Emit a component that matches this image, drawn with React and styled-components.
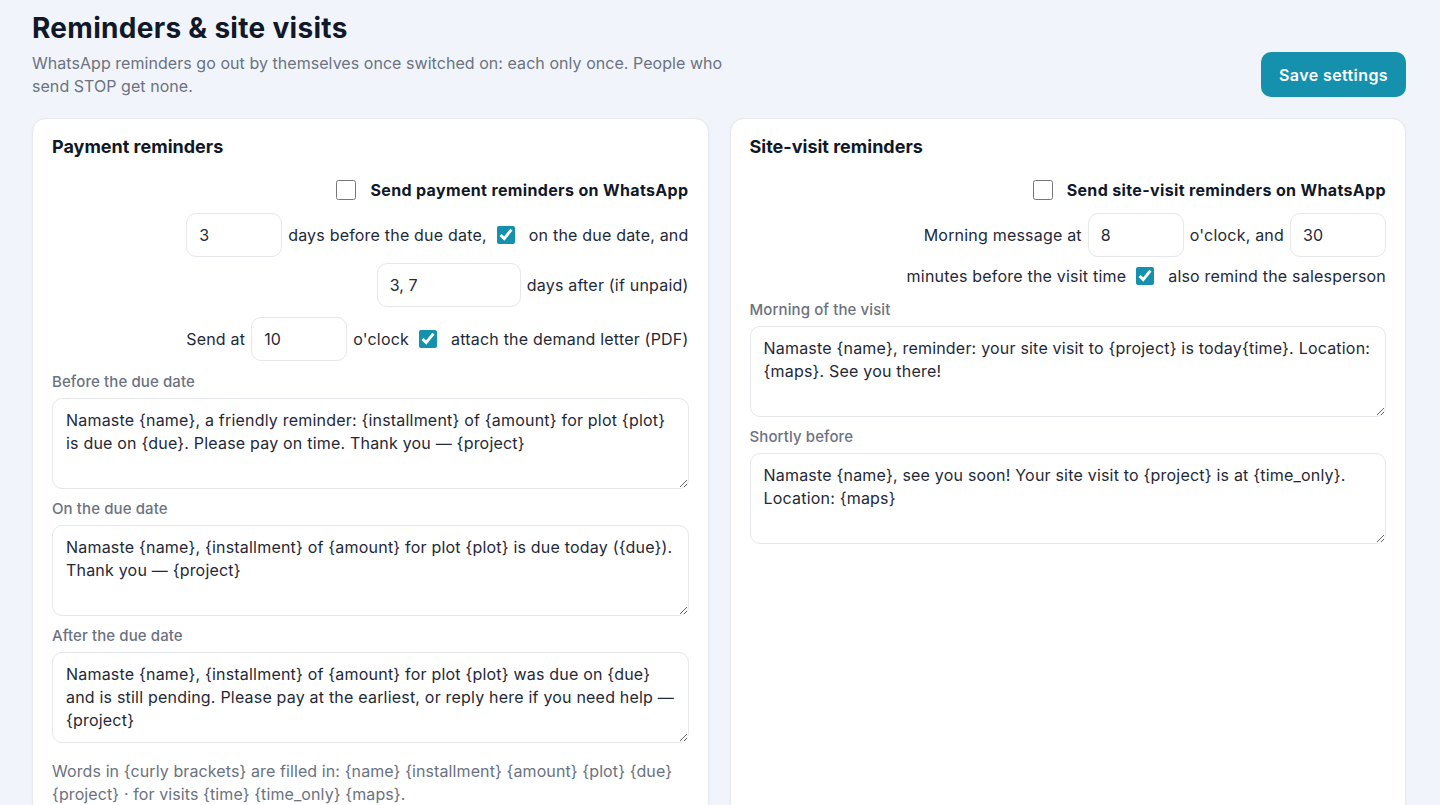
import React from 'react';
import styled, { createGlobalStyle } from 'styled-components';

const GlobalStyle = createGlobalStyle`
  * { box-sizing: border-box; }
  body {
    margin: 0;
    background: #f1f5fb;
    font-family: Inter, "Noto Sans", "Liberation Sans", sans-serif;
    color: #111827;
  }
`;

const Page = styled.div`
  padding: 10px 34px 0 32px;
`;

const Header = styled.header`
  display: flex;
  justify-content: space-between;
  align-items: flex-start;
  margin-bottom: 20px;
`;

const Title = styled.h1`
  margin: 0;
  font-size: 28px;
  font-weight: 700;
  line-height: 36px;
  letter-spacing: 0.3px;
  color: #111827;
`;

const Subtitle = styled.p`
  margin: 6px 0 0;
  max-width: 705px;
  font-size: 16px;
  line-height: 23px;
  color: #6b7280;
  letter-spacing: 0.05px;
`;

const SaveButton = styled.button`
  margin-top: 42px;
  height: 45px;
  padding: 0 18px;
  border: none;
  border-radius: 10px;
  background: #1591ae;
  color: #fff;
  font-family: inherit;
  font-size: 16px;
  font-weight: 600;
  letter-spacing: 0.4px;
  cursor: pointer;
`;

const Columns = styled.div`
  display: grid;
  grid-template-columns: 1fr 1fr;
  gap: 21px;
  align-items: stretch;
`;

const Card = styled.section`
  background: #fff;
  border: 1px solid #e6e9ef;
  border-radius: 14px;
  box-shadow: 0 1px 3px rgba(15, 23, 42, 0.05);
  padding: 18px 19px 24px;
  display: flex;
  flex-direction: column;
`;

const CardTitle = styled.h2`
  margin: 0 0 20px;
  font-size: 18px;
  font-weight: 700;
  line-height: 20px;
  letter-spacing: 0;
`;

const Options = styled.div`
  display: flex;
  flex-direction: column;
  align-items: flex-end;
  gap: ${p => p.$gap || 6}px;
  margin-bottom: ${p => p.$mb || 12}px;
`;

const Row = styled.div`
  display: flex;
  align-items: center;
  justify-content: flex-end;
  gap: 6px;
  min-height: ${p => p.$h || 0}px;
  margin-top: ${p => p.$mt || 0}px;
  font-size: 16px;
  color: #1f2937;
  letter-spacing: 0.2px;
  white-space: nowrap;
`;

const Check = styled.input.attrs({ type: 'checkbox' })`
  width: ${p => (p.$big ? 20 : 18)}px;
  height: ${p => (p.$big ? 20 : 18)}px;
  margin: 0 8px 0 ${p => p.$ml || 4}px;
  accent-color: #1591ae;
`;

const BoldLabel = styled.span`
  font-weight: 700;
  color: #111827;
  letter-spacing: 0.35px;
`;

const NumInput = styled.input`
  width: ${p => p.$w || 96}px;
  height: 44px;
  padding: 0 12px;
  border: 1px solid #e5e7eb;
  border-radius: 10px;
  font-family: inherit;
  font-size: 16px;
  color: #1f2937;
  background: #fff;
  outline: none;
`;

const FieldLabel = styled.label`
  display: block;
  font-size: 15px;
  font-weight: 500;
  line-height: 18px;
  color: #6b7280;
  margin-bottom: 7px;
  letter-spacing: 0.1px;
`;

const Message = styled.textarea`
  display: block;
  width: 100%;
  height: 91px;
  padding: 10px 13px;
  margin-bottom: 11px;
  border: 1px solid #e5e7eb;
  border-radius: 10px;
  font-family: inherit;
  font-size: 16px;
  line-height: 23px;
  letter-spacing: 0.2px;
  color: #1f2937;
  resize: vertical;
  outline: none;
`;

const Hint = styled.p`
  margin: 6px 0 0;
  font-size: 16px;
  line-height: 23px;
  color: #6b7280;
  letter-spacing: 0.1px;
`;

const payment = [
  {
    label: 'Before the due date',
    text: 'Namaste {name}, a friendly reminder: {installment} of {amount} for plot {plot} is due on {due}. Please pay on time. Thank you — {project}',
  },
  {
    label: 'On the due date',
    text: 'Namaste {name}, {installment} of {amount} for plot {plot} is due today ({due}). Thank you — {project}',
  },
  {
    label: 'After the due date',
    text: 'Namaste {name}, {installment} of {amount} for plot {plot} was due on {due} and is still pending. Please pay at the earliest, or reply here if you need help — {project}',
  },
];

const visits = [
  {
    label: 'Morning of the visit',
    text: 'Namaste {name}, reminder: your site visit to {project} is today{time}. Location: {maps}. See you there!',
  },
  {
    label: 'Shortly before',
    text: 'Namaste {name}, see you soon! Your site visit to {project} is at {time_only}. Location: {maps}',
  },
];

function MessageField({ label, text }) {
  return (
    <div>
      <FieldLabel>{label}</FieldLabel>
      <Message defaultValue={text} />
    </div>
  );
}

export default function App() {
  return (
    <>
      <GlobalStyle />
      <Page>
        <Header>
          <div>
            <Title>Reminders &amp; site visits</Title>
            <Subtitle>
              WhatsApp reminders go out by themselves once switched on: each only once. People who send STOP get none.
            </Subtitle>
          </div>
          <SaveButton>Save settings</SaveButton>
        </Header>

        <Columns>
          <Card>
            <CardTitle>Payment reminders</CardTitle>
            <Options>
              <Row $h={26}>
                <Check $big $ml={0} />
                <BoldLabel>Send payment reminders on WhatsApp</BoldLabel>
              </Row>
              <Row $mt={4}>
                <NumInput defaultValue="3" />
                <span>days before the due date,</span>
                <Check defaultChecked />
                <span>on the due date,&nbsp;and</span>
              </Row>
              <Row>
                <NumInput $w={144} defaultValue="3, 7" />
                <span>days after (if unpaid)</span>
              </Row>
              <Row $mt={4}>
                <span>Send at</span>
                <NumInput defaultValue="10" />
                <span>o'clock</span>
                <Check defaultChecked />
                <span>attach the demand letter (PDF)</span>
              </Row>
            </Options>
            {payment.map(m => (
              <MessageField key={m.label} {...m} />
            ))}
            <Hint>
              Words in {'{curly brackets}'} are filled in: {'{name}'} {'{installment}'} {'{amount}'} {'{plot}'} {'{due}'} {'{project}'} · for visits {'{time}'} {'{time_only}'} {'{maps}'}.
            </Hint>
          </Card>

          <Card>
            <CardTitle>Site-visit reminders</CardTitle>
            <Options $gap={8} $mb={14}>
              <Row $h={26}>
                <Check $big $ml={0} />
                <BoldLabel>Send site-visit reminders on WhatsApp</BoldLabel>
              </Row>
              <Row $mt={2}>
                <span>Morning message at</span>
                <NumInput defaultValue="8" />
                <span>o'clock, and</span>
                <NumInput defaultValue="30" />
              </Row>
              <Row $h={22}>
                <span>minutes before the visit time</span>
                <Check defaultChecked />
                <span>also remind the salesperson</span>
              </Row>
            </Options>
            {visits.map(m => (
              <MessageField key={m.label} {...m} />
            ))}
          </Card>
        </Columns>
      </Page>
    </>
  );
}
